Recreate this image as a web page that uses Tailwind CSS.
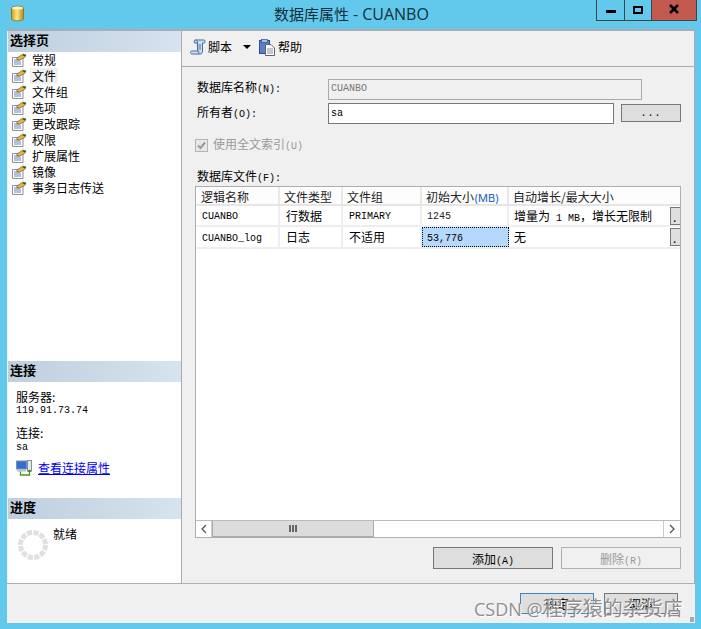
<!DOCTYPE html>
<html lang="zh">
<head>
<meta charset="utf-8">
<script src="https://cdn.jsdelivr.net/npm/@tailwindcss/browser@4"></script>
</head>
<body class="m-0">
<svg width="0" height="0" class="absolute">
  <defs>
    <symbol id="page" viewBox="0 0 16 14">
      <path d="M1.5 4.5H12V13.5H1.5Z" fill="#fff" stroke="#8a8f98"/>
      <path d="M3 7H9M3 9H10M3 11H10" stroke="#6f7fc0"/>
      <path d="M6 5L12 1L15 2L14 4L9 7L6 7Z" fill="#e8b93c" stroke="#6b5a20" stroke-width="0.7"/>
      <path d="M12 1.2L15 2L14.2 3.6L11.5 2.4Z" fill="#5a4a20"/>
    </symbol>
  </defs>
</svg>
<div class="relative w-[701px] h-[629px] overflow-hidden bg-[#63c9ec] flex flex-col font-['Noto_Sans_CJK_SC',sans-serif] text-[12px] leading-4 text-black">
  <!-- title bar -->
  <div class="h-[29px] flex shrink-0">
    <div class="w-[274px] pl-[11px] pt-[5px] shrink-0">
      <svg width="13" height="17" viewBox="0 0 13 17"><defs><linearGradient id="db" x1="0" x2="1" y1="0" y2="0"><stop offset="0" stop-color="#c89a1e"/><stop offset="0.45" stop-color="#ffe98a"/><stop offset="1" stop-color="#b98a14"/></linearGradient></defs><path d="M0.5 3C0.5 0.6 12.5 0.6 12.5 3V14C12.5 16.4 0.5 16.4 0.5 14Z" fill="url(#db)" stroke="#8d7a3a"/><ellipse cx="6.5" cy="3" rx="5.5" ry="1.6" fill="#fff3b8"/></svg>
    </div>
    <div class="flex-1 pt-[4px] text-[15px] leading-[20px] text-[#10303c] font-['Open_Sans','Noto_Sans_CJK_SC',sans-serif] whitespace-nowrap">数据库属性 <span class="text-[16px]">- CUANBO</span></div>
    <div class="flex h-[21px] w-[101px] mr-[4px] border-b border-l border-[#444] shrink-0">
      <div class="w-[28px] border-r border-[#444] flex items-end justify-center pb-[7px]"><div class="w-[10px] h-[3px] bg-black"></div></div>
      <div class="w-[26px] flex justify-center pt-[6px]"><div class="w-[10px] h-[8px] border-2 border-black"></div></div>
      <div class="flex-1 bg-[#c25a50] border-l border-r border-[#444] flex justify-center pt-[4px]">
        <svg width="10" height="10" viewBox="0 0 10 10"><path d="M1 1L9 9M9 1L1 9" stroke="#000" stroke-width="2.6"/></svg>
      </div>
    </div>
  </div>
  <!-- dialog -->
  <div class="ml-[7px] w-[688px] h-[594px] bg-[#f0f0f0] border-t-2 border-[#a7adb3] flex flex-col shrink-0">
    <div class="flex h-[553px] border-b border-[#b0b0b0]">
      <!-- sidebar -->
      <div class="w-[174px] h-full ml-px bg-white border-r border-[#aaa] flex flex-col shrink-0">
        <div class="h-[21px] pl-[2px] bg-gradient-to-r from-[#bfcfde] to-[#d6e3f0] text-[13px] font-bold leading-[18px]">选择页</div>
        <div class="h-[309px]">
          <div class="h-[16px] flex items-center"><svg class="ml-[3px] mr-[5px]" width="16" height="14"><use href="#page"/></svg>常规</div>
          <div class="h-[16px] flex items-center"><svg class="ml-[3px] mr-[3px]" width="16" height="14"><use href="#page"/></svg><span class="px-[2px] bg-[#f0f0f0]">文件</span></div>
          <div class="h-[16px] flex items-center"><svg class="ml-[3px] mr-[5px]" width="16" height="14"><use href="#page"/></svg>文件组</div>
          <div class="h-[16px] flex items-center"><svg class="ml-[3px] mr-[5px]" width="16" height="14"><use href="#page"/></svg>选项</div>
          <div class="h-[16px] flex items-center"><svg class="ml-[3px] mr-[5px]" width="16" height="14"><use href="#page"/></svg>更改跟踪</div>
          <div class="h-[16px] flex items-center"><svg class="ml-[3px] mr-[5px]" width="16" height="14"><use href="#page"/></svg>权限</div>
          <div class="h-[16px] flex items-center"><svg class="ml-[3px] mr-[5px]" width="16" height="14"><use href="#page"/></svg>扩展属性</div>
          <div class="h-[16px] flex items-center"><svg class="ml-[3px] mr-[5px]" width="16" height="14"><use href="#page"/></svg>镜像</div>
          <div class="h-[16px] flex items-center"><svg class="ml-[3px] mr-[5px]" width="16" height="14"><use href="#page"/></svg>事务日志传送</div>
        </div>
        <div class="h-[21px] pl-[2px] bg-gradient-to-r from-[#bfcfde] to-[#d6e3f0] text-[13px] font-bold leading-[18px]">连接</div>
        <div class="h-[116px] pl-[8px] pt-[9px]">
          <div class="h-[12px] leading-[12px]">服务器:</div>
          <div class="mt-[2px] h-[12px] leading-[12px] font-['Liberation_Mono',monospace] text-[10px]">119.91.73.74</div>
          <div class="mt-[10px] h-[12px] leading-[12px]">连接:</div>
          <div class="mt-[3px] h-[12px] leading-[12px] font-['Liberation_Mono',monospace] text-[10px]">sa</div>
          <div class="mt-[6px] flex items-center h-[16px]">
            <svg class="mr-[5px]" width="17" height="16" viewBox="0 0 17 16"><rect x="0.5" y="1" width="10" height="8" fill="#2f6fd6" stroke="#7f8fa8"/><rect x="11.5" y="0.5" width="4" height="10" fill="#e4e7ea" stroke="#8a8f98"/><rect x="1" y="9" width="9" height="2.5" fill="#b9c2cc"/><path d="M4.5 11.5V15H13.5V10.5" fill="none" stroke="#3b9a1c" stroke-width="1.3"/><path d="M11 12L13.5 9.5L16 12Z" fill="#3b9a1c"/></svg>
            <a href="#" class="text-[#0000ee] underline">查看连接属性</a>
          </div>
        </div>
        <div class="h-[21px] pl-[2px] bg-gradient-to-r from-[#bfcfde] to-[#d6e3f0] text-[13px] font-bold leading-[18px]">进度</div>
        <div class="flex pl-[9px] pt-[8px]">
          <svg class="mt-[2px]" width="32" height="32" viewBox="0 0 32 32"><circle cx="16" cy="16" r="12.5" fill="none" stroke="#e0e0e0" stroke-width="5" stroke-dasharray="5.2 1.35"/></svg>
          <span class="ml-[4px] -mt-[1px]">就绪</span>
        </div>
      </div>
      <!-- right -->
      <div class="flex-1 min-w-0 border-r border-[#aaa] flex flex-col">
        <div class="h-[36px] border-b border-[#a9a9b2] flex items-center pl-[8px] pb-[3px] shrink-0">
          <svg width="16" height="16" viewBox="0 0 16 16"><path d="M5.5 1H14C15.5 1 15.5 4 14 4H12.5V12C12.5 14 11.5 15 10 15H2C0 15 0 12 2 12H8.5C9 13 9 14 8.5 15M5.5 1C7 1 7.5 2 7.5 4V12M5.5 1C4 1 4 3 4.5 4H7.5" fill="#cfe0f5" stroke="#3f6d9e"/><path d="M8.5 6H11M8.5 8H11M8.5 10H11" stroke="#3f6d9e"/></svg>
          <span class="ml-[2px]">脚本</span>
          <span class="ml-[11px] w-0 h-0 border-x-[4px] border-x-transparent border-t-[4px] border-t-black"></span>
          <svg class="ml-[8px]" width="16" height="17" viewBox="0 0 16 17"><rect x="0.5" y="1.5" width="10" height="13" fill="#5b7fc6" stroke="#2f4f8f"/><rect x="2.5" y="0.5" width="6" height="3" fill="#a9bfe6" stroke="#2f4f8f" stroke-width="0.7"/><path d="M6.5 5.5H12L15.5 9V16.5H6.5Z" fill="#fff" stroke="#5a6670"/><path d="M8 10H14M8 12H14M8 14H14" stroke="#8a939c"/></svg>
          <span class="ml-[3px]">帮助</span>
        </div>
        <div class="pl-[15px] pt-[12px] flex-1 flex flex-col">
          <div class="flex h-[21px]">
            <div class="w-[131px] whitespace-nowrap">数据库名称<span class="font-['Liberation_Mono',monospace] text-[10px]">(N):</span></div>
            <div class="w-[314px] h-[21px] border border-[#aaa] font-['Liberation_Mono',monospace] text-[10px] leading-[17px] pl-[2px] text-[#777]">CUANBO</div>
          </div>
          <div class="flex h-[21px] mt-[3px]">
            <div class="w-[131px] pt-[1px] whitespace-nowrap">所有者<span class="font-['Liberation_Mono',monospace] text-[10px]">(O):</span></div>
            <div class="w-[286px] h-[21px] bg-white border border-[#777] font-['Liberation_Mono',monospace] text-[10px] leading-[19px] pl-[2px]">sa</div>
            <div class="ml-[7px] mt-[1px] w-[60px] h-[18px] bg-[#dedede] border border-[#777] font-['Liberation_Mono',monospace] text-[10px] leading-[18px] text-center tracking-[1px]">...</div>
          </div>
          <div class="flex items-center mt-[14px] h-[14px] text-[#9a9a9a]">
            <div class="w-[13px] h-[13px] -ml-[2px] bg-[#e8e8e8] border border-[#b5b5b5] flex items-center justify-center">
              <svg width="9" height="9" viewBox="0 0 9 9"><path d="M1 4.5L3.5 7L8 1.5" fill="none" stroke="#9a9a9a" stroke-width="2"/></svg>
            </div>
            <span class="ml-[5px] whitespace-nowrap">使用全文索引<span class="font-['Liberation_Mono',monospace] text-[10px]">(U)</span></span>
          </div>
          <div class="mt-[16px] h-[16px] whitespace-nowrap">数据库文件<span class="font-['Liberation_Mono',monospace] text-[10px]">(F):</span></div>
          <!-- table -->
          <div class="-ml-[2px] mt-[2px] w-[486px] h-[352px] bg-white border border-[#aeaeae] flex flex-col relative overflow-hidden shrink-0">
            <div class="flex h-[17px] bg-[#fdfdfd] border-b-2 border-[#e6e6e6] box-content shrink-0 text-[#222]">
              <div class="w-[84px] pl-[5px] pt-[2px] border-r-2 border-[#e8e8e8]">逻辑名称</div>
              <div class="w-[63px] pl-[4px] pt-[2px] border-r-2 border-[#e8e8e8]">文件类型</div>
              <div class="w-[79px] pl-[4px] pt-[2px] border-r-2 border-[#e8e8e8]">文件组</div>
              <div class="w-[87px] pl-[4px] pt-[2px] border-r-2 border-[#e8e8e8] whitespace-nowrap">初始大小<span class="font-['Inter',sans-serif] text-[#2a5fc0] text-[11px]">(MB)</span></div>
              <div class="flex-1 pl-[4px] pt-[2px]">自动增长/最大大小</div>
            </div>
            <div class="flex h-[19px] border-b-2 border-[#eee] box-content items-center shrink-0">
              <div class="w-[84px] pl-[6px] border-r-2 border-[#eee] h-full font-['Liberation_Mono',monospace] text-[10px] leading-[22px]">CUANBO</div>
              <div class="w-[63px] pl-[6px] border-r-2 border-[#eee] h-full leading-[20px]">行数据</div>
              <div class="w-[79px] pl-[6px] border-r-2 border-[#eee] h-full font-['Liberation_Mono',monospace] text-[10px] leading-[22px]">PRIMARY</div>
              <div class="w-[87px] pl-[5px] border-r-2 border-[#eee] h-full font-['Liberation_Mono',monospace] text-[10px] leading-[22px] text-[#222]">1245</div>
              <div class="flex-1 pl-[5px] h-full leading-[20px] flex whitespace-nowrap"><span class="flex-1">增量为<span class="font-['Liberation_Mono',monospace] text-[10px]"> 1 MB</span>，增长无限制</span><span class="w-[10px] h-[18px] mt-[1px] bg-[#dedede] border border-[#777] border-r-0 pl-[2px] leading-[18px]">.</span></div>
            </div>
            <div class="flex h-[20px] border-b-2 border-[#eee] box-content items-center shrink-0">
              <div class="w-[84px] pl-[6px] border-r-2 border-[#eee] h-full font-['Liberation_Mono',monospace] text-[10px] leading-[24px]">CUANBO_log</div>
              <div class="w-[63px] pl-[6px] border-r-2 border-[#eee] h-full leading-[20px]">日志</div>
              <div class="w-[79px] pl-[6px] border-r-2 border-[#eee] h-full leading-[20px]">不适用</div>
              <div class="w-[87px] pl-[4px] bg-[#b5d8fd] border border-dotted border-black h-full font-['Liberation_Mono',monospace] text-[10px] leading-[22px]">53,776</div>
              <div class="flex-1 pl-[5px] h-full leading-[20px] flex"><span class="flex-1">无</span><span class="w-[10px] h-[18px] mt-[1px] bg-[#dedede] border border-[#777] border-r-0 pl-[2px] leading-[18px]">.</span></div>
            </div>
            <div class="flex-1"></div>
            <!-- scrollbar -->
            <div class="flex h-[16px] border-t border-[#bbb] box-content shrink-0 bg-white">
              <div class="w-[16px] border-r border-[#ccc] flex items-center justify-center"><svg width="6" height="10" viewBox="0 0 6 10"><path d="M5 1L1 5L5 9" fill="none" stroke="#555" stroke-width="1.3"/></svg></div>
              <div class="w-[162px] bg-[#dcdcdc] border-x border-b border-[#aaa] flex items-center justify-center gap-px"><i class="w-[2px] h-[7px] bg-[#666]"></i><i class="w-[2px] h-[7px] bg-[#666]"></i><i class="w-[2px] h-[7px] bg-[#666]"></i></div>
              <div class="flex-1"></div>
              <div class="w-[17px] border-l border-[#ccc] flex items-center justify-center"><svg width="6" height="10" viewBox="0 0 6 10"><path d="M1 1L5 5L1 9" fill="none" stroke="#555" stroke-width="1.3"/></svg></div>
            </div>
          </div>
          <div class="flex mt-[9px] ml-[236px] gap-[8px]">
            <div class="w-[120px] h-[22px] bg-[#dedede] border border-[#777] leading-[22px] text-center">添加<span class="font-['Liberation_Mono',monospace] text-[10px]">(A)</span></div>
            <div class="w-[120px] h-[22px] border border-[#b0b0b0] text-[#999] leading-[22px] text-center">删除<span class="font-['Liberation_Mono',monospace] text-[10px]">(R)</span></div>
          </div>
        </div>
      </div>
    </div>
    <!-- footer -->
    <div class="flex pl-[513px] pt-[9px] gap-[10px]">
      <div class="w-[74px] h-[21px] bg-[#dedede] border border-[#3f86c0] leading-[19px] text-center">确定</div>
      <div class="w-[74px] h-[21px] bg-[#dedede] border border-[#777] leading-[19px] text-center">取消</div>
    </div>
  </div>
  <div class="absolute left-[474px] top-[596px] text-[18px] leading-[26px] text-[#8f8f8f] font-['Open_Sans','Noto_Sans_CJK_SC',sans-serif] whitespace-nowrap [text-shadow:1px_1px_0_#fff]">CSDN @<span class="text-[20px]">程序猿的杂货店</span></div>
  <div class="absolute left-[690px] top-[617px] w-[4px] h-[5px] bg-[radial-gradient(#a8a8a8_1px,transparent_1px)] bg-[length:2px_2px]"></div>
</div>
</body>
</html>
